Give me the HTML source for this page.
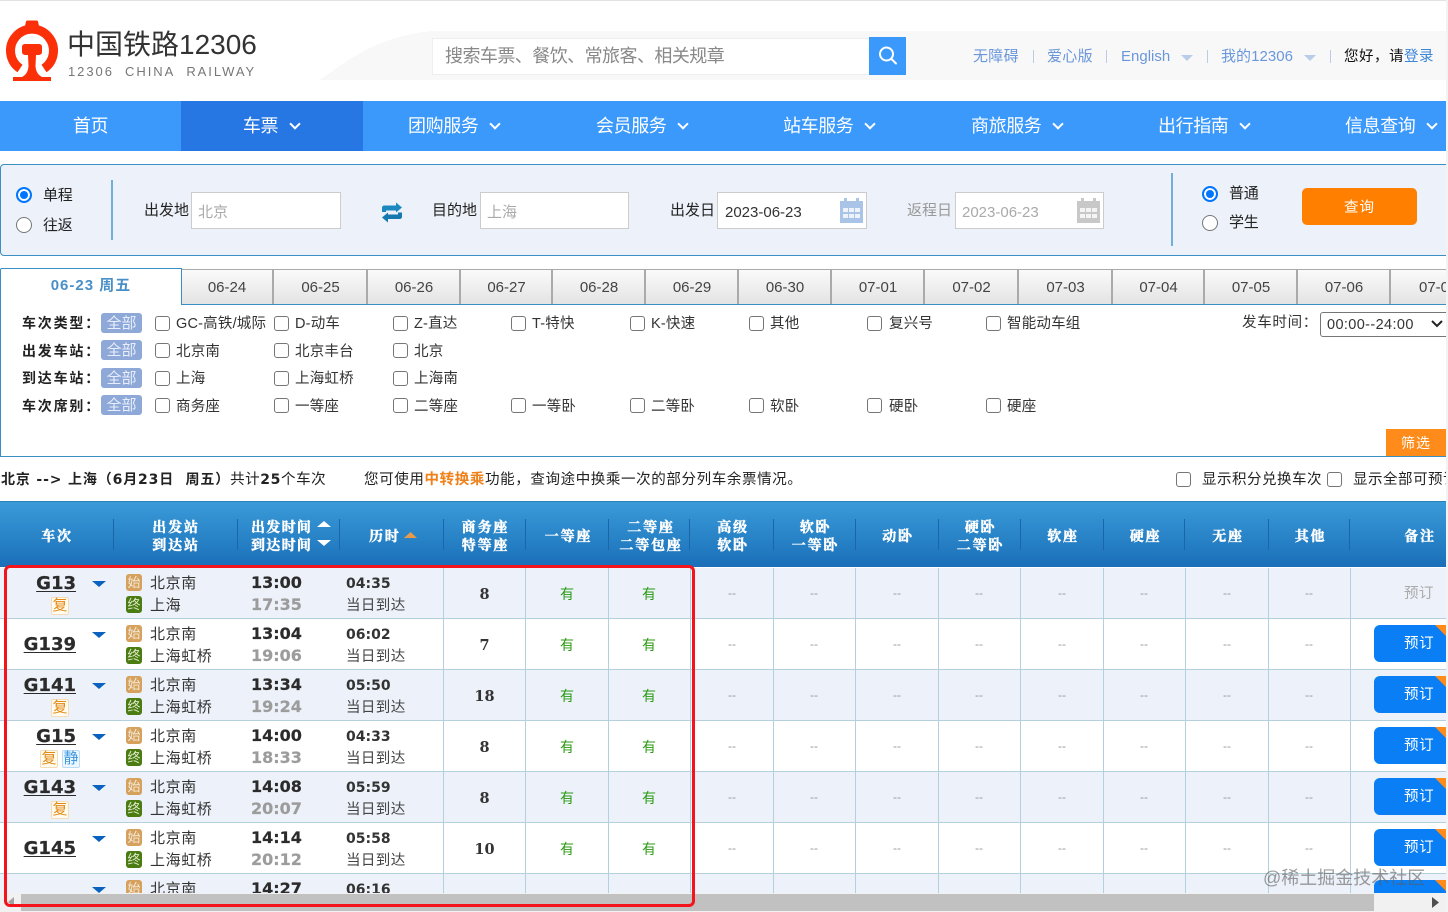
<!DOCTYPE html>
<html lang="zh-CN">
<head>
<meta charset="utf-8">
<title>中国铁路12306</title>
<style>
*{box-sizing:border-box;margin:0;padding:0}
html,body{width:1448px;height:912px;overflow:hidden;background:#fff}
body{position:relative;font-family:"Liberation Sans","Noto Sans CJK SC",sans-serif;font-size:14px;color:#333}
.a{position:absolute;white-space:nowrap}
.nav{top:101px;height:50px;line-height:51px;color:#fff;font-size:18px;text-align:center;letter-spacing:-.4px}
.chev{display:inline-block;width:8px;height:8px;border-right:2px solid #fff;border-bottom:2px solid #fff;transform:rotate(45deg);margin-left:13px;position:relative;top:-4px}
.tl{top:48px;font-size:15px;color:#6a97dc;line-height:18px;letter-spacing:.3px}
.sp{top:50px;width:1px;height:13px;background:#b8cdea}
.dn{width:0;height:0;border-left:6px solid transparent;border-right:6px solid transparent;border-top:6px solid #b9cdea;top:55px}
.rd{width:16px;height:16px;border-radius:50%;border:1px solid #767676;background:#fff}
.rd.on{border:2px solid #0075ff;background:#0075ff;box-shadow:inset 0 0 0 2px #fff}
.lb{font-size:15px;line-height:20px;color:#222;letter-spacing:0}
.inp{top:192px;height:37px;background:#fff;border:1px solid #ccc;line-height:39px;padding-left:6px;font-size:15px;color:#aaa}
.tab{top:269px;height:36px;border-right:2px solid #aaa;border-top:1px solid #aaa;background:linear-gradient(#fafafa,#e3e3e3);text-align:center;line-height:36px;font-size:15px;color:#444;padding-left:1px}
.k{left:22px;font-size:14px;font-weight:700;line-height:20px;color:#222;letter-spacing:1.8px;margin-top:1px}
.all{left:101px;width:41px;height:20px;background:#8ea8d8;border-radius:3px;color:#e8eefb;text-align:center;line-height:21px;font-size:15px}
.cb{width:15px;height:15px;border:1px solid #767676;border-radius:3px;background:#fff}
.ct{font-size:14.5px;line-height:20px;color:#333;letter-spacing:.2px;margin-top:2px}
.h{top:520px;color:#fff;font-size:14px;font-weight:700;line-height:18px;text-align:center;letter-spacing:1.8px;font-family:"Liberation Serif","Noto Serif CJK SC",serif;-webkit-text-stroke:.45px #fff}
.hs{top:519px;width:1px;height:31px;background:#1b66a8}
.row{position:absolute;left:0;width:1446px;height:51px;border-bottom:1px solid #b5d0dd}
.o{background:#edf1f9}.e{background:#fff}
.v{position:absolute;top:0;width:1px;height:51px;background:#b5d0dd}
.c{position:absolute;white-space:nowrap}
.no{left:0;width:76px;text-align:right;font:700 18px/22px "DejaVu Sans",sans-serif;color:#2b2b2b;text-decoration:underline;text-underline-offset:2px;margin-top:1px;-webkit-text-stroke:.25px #2b2b2b}
.ar{left:92px;top:13px;width:0;height:0;border-left:7px solid transparent;border-right:7px solid transparent;border-top:6px solid #0a62c0}
.tag{top:29px;width:18px;height:18px;background:#fffbee;border:1px solid #f5dcb8;border-radius:2px;color:#e58a15;font-size:15px;line-height:15px;text-align:center}
.tag.b{background:#eef7ff;border-color:#bcdcf5;color:#3d98e0}
.st{left:126px;width:16px;height:17px;border-radius:3px;color:#f4ead8;font-size:13px;line-height:17px;text-align:center}
.s1{background:#d5a15d;top:6px}.s2{background:#4b7c12;top:28px;color:#dce9c8}
.nm{left:150px;font-size:15px;line-height:20px;color:#333;letter-spacing:.6px;margin-top:2px}
.t{left:251px;font:700 16px/22px "DejaVu Sans",sans-serif;color:#2b2b2b;margin-top:0;-webkit-text-stroke:.2px currentColor}
.t2{color:#9c9c9c}
.du{left:346px;top:6px;font:700 14px/20px "DejaVu Sans",sans-serif;color:#333}
.dd{left:346px;top:28px;font-size:14.5px;line-height:20px;color:#444;letter-spacing:.4px}
.n{left:443px;width:83px;top:16px;text-align:center;font:700 14.5px/22px "DejaVu Serif",serif;color:#333}
.y{top:16px;width:82px;text-align:center;color:#2a9a12;font-size:14px;line-height:20px}
.d{top:15px;width:82px;text-align:center;color:#999;font-size:12px;line-height:20px}
.bk{left:1374px;top:6px;width:72px;height:37px;background:#0a7ff5;border-radius:6px 0 0 6px;color:#fff;line-height:39px;font-size:14.5px;letter-spacing:.6px;overflow:hidden;padding-left:30px;text-align:left}
.bk i{position:absolute;right:0;top:0;width:0;height:0;border-top:11px solid #ff8c1a;border-left:11px solid transparent}
</style>
</head>
<body>
<div class="a" style="left:0;top:0;width:1448px;height:1px;background:#e2e2e2"></div>

<!-- header band -->
<svg class="a" style="left:310px;top:28px" width="125" height="54" viewBox="0 0 125 54"><path d="M10 52 C40 30 70 8 122 3 L125 52 Z" fill="#f8f8f8"/></svg>
<div class="a" style="left:430px;top:31px;width:1016px;height:49px;background:#f8f8f8"></div>

<!-- logo -->
<svg class="a" style="left:0;top:15px" width="64" height="70" viewBox="0 15 64 70">
<path d="M20 68.500 A21.500 21.500 0 1 1 44 68.500" fill="none" stroke="#fb3008" stroke-width="9"/>
<path d="M26 21.500 Q26 20.500 28 20.500 L36 20.500 Q38 20.500 38 21.500 L39 26 L25 26 Z" fill="#fb3008"/>
<path d="M25 44 L39 44 Q42 44 42 47 L42 52 Q42 55 38 55 L36 55 L35.500 66 Q36 74 42 77 L51 77 L51 81 L13 81 L13 77 L22 77 Q28 74 28.500 66 L28 55 L26 55 Q22 55 22 52 L22 47 Q22 44 25 44 Z" fill="#fb3008"/>
</svg>
<div class="a" style="left:67px;top:27px;font-size:28px;line-height:36px;color:#333;letter-spacing:0">中国铁路12306</div>
<div class="a" style="left:68px;top:64px;font-size:13px;line-height:16px;color:#777;letter-spacing:1.95px">12306&nbsp; CHINA&nbsp; RAILWAY</div>

<!-- search -->
<div class="a" style="left:432px;top:38px;width:438px;height:37px;background:#fff;border:1px solid #eee;line-height:35px;padding-left:12px;font-size:18px;color:#888;letter-spacing:-.55px">搜索车票、餐饮、常旅客、相关规章</div>
<div class="a" style="left:869px;top:37px;width:37px;height:38px;background:#3b99fc"></div>
<svg class="a" style="left:876px;top:45px" width="24" height="24" viewBox="0 0 24 24"><circle cx="10.500" cy="9" r="6.500" fill="none" stroke="#fff" stroke-width="2"/><path d="M15.500 14l4.500 4.500" stroke="#fff" stroke-width="2" stroke-linecap="round"/></svg>

<div class="a tl" style="left:973px">无障碍</div><div class="a sp" style="left:1033px"></div>
<div class="a tl" style="left:1047px">爱心版</div><div class="a sp" style="left:1106px"></div>
<div class="a tl" style="left:1121px;letter-spacing:0">English</div><div class="a dn" style="left:1181px"></div><div class="a sp" style="left:1207px"></div>
<div class="a tl" style="left:1221px;letter-spacing:.05px">我的12306</div><div class="a dn" style="left:1304px"></div><div class="a sp" style="left:1330px"></div>
<div class="a" style="left:1344px;top:48px;font-size:14.5px;line-height:18px;color:#111;letter-spacing:.5px">您好，请<span style="color:#3b86d8">登录</span></div>

<!-- nav -->
<div class="a" style="left:0;top:101px;width:1446px;height:50px;background:#3b99fc"></div>
<div class="a" style="left:181px;top:101px;width:182px;height:50px;background:#2676e3"></div>
<div class="a nav" style="left:0;width:181px">首页</div>
<div class="a nav" style="left:180px;width:182px">车票<span class="chev"></span></div>
<div class="a nav" style="left:408px">团购服务<span class="chev"></span></div>
<div class="a nav" style="left:596px">会员服务<span class="chev"></span></div>
<div class="a nav" style="left:783px">站车服务<span class="chev"></span></div>
<div class="a nav" style="left:971px">商旅服务<span class="chev"></span></div>
<div class="a nav" style="left:1158px">出行指南<span class="chev"></span></div>
<div class="a nav" style="left:1345px">信息查询<span class="chev"></span></div>
<div class="a" style="left:1446px;top:0;width:2px;height:912px;background:#f3f3f3;z-index:9"></div>

<!-- query panel -->
<div class="a" style="left:0;top:164px;width:1448px;height:92px;background:#edf1f9;border:1px solid #3b8fc4;border-right:0;border-radius:4px 0 0 4px"></div>
<div class="a rd on" style="left:16px;top:187px"></div><div class="a lb" style="left:43px;top:186px;letter-spacing:-.2px">单程</div>
<div class="a rd" style="left:16px;top:217px"></div><div class="a lb" style="left:43px;top:216px;letter-spacing:-.2px">往返</div>
<div class="a" style="left:111px;top:180px;width:2px;height:60px;background:#6fb0d8"></div>
<div class="a lb" style="left:144px;top:201px">出发地</div>
<div class="a inp" style="left:191px;width:150px">北京</div>
<svg class="a" style="left:381px;top:202px" width="22" height="22" viewBox="0 0 22 22"><path d="M1 10V6Q1 3.500 3.500 3.500H15V0.500L21 5.500L15 10.500V8.500H5V10Z" fill="#1b89c0"/><path d="M21 10.500V14.500Q21 17 18.500 17H7V20.500L1 15.500L7 10.500V12.500H17V10.500Z" fill="#1578ae"/></svg>
<div class="a lb" style="left:432px;top:201px">目的地</div>
<div class="a inp" style="left:480px;width:149px">上海</div>
<div class="a lb" style="left:670px;top:201px">出发日</div>
<div class="a inp" style="left:717px;width:150px;color:#333;padding-left:7px">2023-06-23</div>
<svg class="a" style="left:839px;top:197px" width="25" height="27" viewBox="0 0 25 27"><path d="M1 4h23v22H1z" fill="#a9c4e6"/><rect x="5" y="1" width="3" height="6" fill="#a9c4e6"/><rect x="17" y="1" width="3" height="6" fill="#a9c4e6"/><g fill="#eef3fb"><rect x="4" y="11" width="5" height="4"/><rect x="10" y="11" width="5" height="4"/><rect x="16" y="11" width="5" height="4"/><rect x="4" y="17" width="5" height="4"/><rect x="10" y="17" width="5" height="4"/><rect x="16" y="17" width="5" height="4"/></g></svg>
<div class="a lb" style="left:907px;top:201px;color:#999">返程日</div>
<div class="a inp" style="left:955px;width:149px">2023-06-23</div>
<svg class="a" style="left:1076px;top:197px" width="25" height="27" viewBox="0 0 25 27"><path d="M1 4h23v22H1z" fill="#c8c8c8"/><rect x="5" y="1" width="3" height="6" fill="#c8c8c8"/><rect x="17" y="1" width="3" height="6" fill="#c8c8c8"/><g fill="#f4f4f4"><rect x="4" y="11" width="5" height="4"/><rect x="10" y="11" width="5" height="4"/><rect x="16" y="11" width="5" height="4"/><rect x="4" y="17" width="5" height="4"/><rect x="10" y="17" width="5" height="4"/><rect x="16" y="17" width="5" height="4"/></g></svg>
<div class="a" style="left:1171px;top:173px;width:2px;height:73px;background:#6fb0d8"></div>
<div class="a rd on" style="left:1202px;top:186px"></div><div class="a lb" style="left:1229px;top:184px;letter-spacing:-.2px">普通</div>
<div class="a rd" style="left:1202px;top:215px"></div><div class="a lb" style="left:1229px;top:213px;letter-spacing:-.2px">学生</div>
<div class="a" style="left:1302px;top:188px;width:115px;height:37px;background:#ff8000;border-radius:5px;color:#fff;text-align:center;line-height:40px;font-size:14.500px;letter-spacing:1px">查询</div>

<!-- date tabs -->
<div class="a tab" style="left:181px;width:93px">06-24</div>
<div class="a tab" style="left:274px;width:94px">06-25</div>
<div class="a tab" style="left:368px;width:93px">06-26</div>
<div class="a tab" style="left:461px;width:92px">06-27</div>
<div class="a tab" style="left:553px;width:93px">06-28</div>
<div class="a tab" style="left:646px;width:93px">06-29</div>
<div class="a tab" style="left:739px;width:93px">06-30</div>
<div class="a tab" style="left:832px;width:93px">07-01</div>
<div class="a tab" style="left:925px;width:94px">07-02</div>
<div class="a tab" style="left:1019px;width:94px">07-03</div>
<div class="a tab" style="left:1113px;width:92px">07-04</div>
<div class="a tab" style="left:1205px;width:93px">07-05</div>
<div class="a tab" style="left:1298px;width:93px">07-06</div>
<div class="a tab" style="left:1391px;width:57px;border-right:0;overflow:hidden;text-align:left;padding-left:28px">07-07</div>

<!-- filter box -->
<div class="a" style="left:181px;top:304px;width:1267px;height:1px;background:#3b8fc4"></div>
<div class="a" style="left:0;top:268px;width:182px;height:37px;background:#fff;border:1px solid #3b8fc4;border-bottom:0;border-radius:2px 0 0 0;text-align:center;line-height:34px;font-size:15px;font-weight:700;color:#4a90c8;letter-spacing:1px">06-23 周五</div>
<div class="a" style="left:0;top:305px;width:1px;height:152px;background:#3b8fc4"></div>
<div class="a" style="left:0;top:456px;width:1448px;height:1px;background:#3b8fc4"></div>

<div class="a k" style="top:312px">车次类型：</div><div class="a all" style="top:313px">全部</div>
<div class="a k" style="top:340px">出发车站：</div><div class="a all" style="top:340px">全部</div>
<div class="a k" style="top:367px">到达车站：</div><div class="a all" style="top:368px">全部</div>
<div class="a k" style="top:395px">车次席别：</div><div class="a all" style="top:395px">全部</div>

<div class="a cb" style="left:155px;top:316px"></div><div class="a ct" style="left:176px;top:312px">GC-高铁/城际</div>
<div class="a cb" style="left:274px;top:316px"></div><div class="a ct" style="left:295px;top:312px">D-动车</div>
<div class="a cb" style="left:393px;top:316px"></div><div class="a ct" style="left:414px;top:312px">Z-直达</div>
<div class="a cb" style="left:511px;top:316px"></div><div class="a ct" style="left:532px;top:312px">T-特快</div>
<div class="a cb" style="left:630px;top:316px"></div><div class="a ct" style="left:651px;top:312px">K-快速</div>
<div class="a cb" style="left:749px;top:316px"></div><div class="a ct" style="left:770px;top:312px">其他</div>
<div class="a cb" style="left:867px;top:316px"></div><div class="a ct" style="left:889px;top:312px">复兴号</div>
<div class="a cb" style="left:986px;top:316px"></div><div class="a ct" style="left:1007px;top:312px">智能动车组</div>

<div class="a cb" style="left:155px;top:343px"></div><div class="a ct" style="left:176px;top:340px">北京南</div>
<div class="a cb" style="left:274px;top:343px"></div><div class="a ct" style="left:295px;top:340px">北京丰台</div>
<div class="a cb" style="left:393px;top:343px"></div><div class="a ct" style="left:414px;top:340px">北京</div>

<div class="a cb" style="left:155px;top:371px"></div><div class="a ct" style="left:176px;top:367px">上海</div>
<div class="a cb" style="left:274px;top:371px"></div><div class="a ct" style="left:295px;top:367px">上海虹桥</div>
<div class="a cb" style="left:393px;top:371px"></div><div class="a ct" style="left:414px;top:367px">上海南</div>

<div class="a cb" style="left:155px;top:398px"></div><div class="a ct" style="left:176px;top:395px">商务座</div>
<div class="a cb" style="left:274px;top:398px"></div><div class="a ct" style="left:295px;top:395px">一等座</div>
<div class="a cb" style="left:393px;top:398px"></div><div class="a ct" style="left:414px;top:395px">二等座</div>
<div class="a cb" style="left:511px;top:398px"></div><div class="a ct" style="left:532px;top:395px">一等卧</div>
<div class="a cb" style="left:630px;top:398px"></div><div class="a ct" style="left:651px;top:395px">二等卧</div>
<div class="a cb" style="left:749px;top:398px"></div><div class="a ct" style="left:770px;top:395px">软卧</div>
<div class="a cb" style="left:867px;top:398px"></div><div class="a ct" style="left:889px;top:395px">硬卧</div>
<div class="a cb" style="left:986px;top:398px"></div><div class="a ct" style="left:1007px;top:395px">硬座</div>

<div class="a ct" style="left:1242px;top:311px;letter-spacing:.7px">发车时间：</div>
<div class="a" style="left:1320px;top:312px;width:128px;height:25px;border:1px solid #767676;border-radius:3px 0 0 3px;background:#fff;line-height:24px;padding-left:6px;font-size:14.500px;letter-spacing:.38px;color:#333">00:00--24:00</div>
<svg class="a" style="left:1430px;top:319px" width="14" height="10" viewBox="0 0 14 10"><path d="M2 2l5 5 5-5" fill="none" stroke="#222" stroke-width="2"/></svg>
<div class="a" style="left:1386px;top:429px;width:60px;height:27px;background:#ff8c1a;color:#fff;text-align:center;line-height:28px;font-size:14px;letter-spacing:1px">筛选</div>

<!-- summary -->
<div class="a" style="left:1px;top:470px;font-size:14.500px;line-height:20px;color:#222;letter-spacing:.6px"><b style="font-family:'DejaVu Sans','Noto Sans CJK SC',sans-serif;font-size:14px;letter-spacing:.85px">北京 --&gt; 上海（6月23日&nbsp; 周五）</b>共计<b style="font-family:'DejaVu Sans',sans-serif;font-size:14px">25</b>个车次</div>
<div class="a" style="left:364px;top:470px;font-size:14.500px;line-height:20px;color:#222;letter-spacing:.62px">您可使用<span style="color:#f08019;font-weight:700">中转换乘</span>功能，查询途中换乘一次的部分列车余票情况。</div>
<div class="a cb" style="left:1176px;top:472px"></div><div class="a ct" style="left:1202px;top:468px;color:#222;letter-spacing:.5px">显示积分兑换车次</div>
<div class="a cb" style="left:1327px;top:472px"></div><div class="a ct" style="left:1353px;top:468px;color:#222;width:93px;overflow:hidden;letter-spacing:.5px">显示全部可预订车次</div>

<!-- table header -->
<div class="a" style="left:0;top:501px;width:1446px;height:66px;background:linear-gradient(#3a9bd9,#1a6fb8);border-top:1px solid #2a83bb"></div>
<div class="a h" style="left:0;width:114px;top:529px">车次</div>
<div class="a h" style="left:114px;width:124px">出发站<br>到达站</div>
<div class="a h" style="left:251px;letter-spacing:1.3px">出发时间<br>到达时间</div>
<svg class="a" style="left:317px;top:520px" width="14" height="28" viewBox="0 0 14 28"><path d="M0 7L7 1l7 6z" fill="#fff"/><path d="M0 20h14l-7 6z" fill="#fff"/></svg>
<div class="a h" style="left:369px;top:529px">历时</div>
<svg class="a" style="left:404px;top:531px" width="13" height="8" viewBox="0 0 13 8"><path d="M0 7L6.500 1 13 7z" fill="#e89a4c"/></svg>
<div class="a h" style="left:444px;width:83px">商务座<br>特等座</div>
<div class="a h" style="left:527px;width:83px;top:529px">一等座</div>
<div class="a h" style="left:610px;width:82px">二等座<br>二等包座</div>
<div class="a h" style="left:692px;width:82px">高级<br>软卧</div>
<div class="a h" style="left:774px;width:83px">软卧<br>一等卧</div>
<div class="a h" style="left:857px;width:82px;top:529px">动卧</div>
<div class="a h" style="left:939px;width:83px">硬卧<br>二等卧</div>
<div class="a h" style="left:1022px;width:82px;top:529px">软座</div>
<div class="a h" style="left:1104px;width:83px;top:529px">硬座</div>
<div class="a h" style="left:1187px;width:82px;top:529px">无座</div>
<div class="a h" style="left:1269px;width:83px;top:529px">其他</div>
<div class="a h" style="left:1391px;width:58px;top:529px">备注</div>
<div class="a hs" style="left:113px"></div><div class="a hs" style="left:237px"></div><div class="a hs" style="left:339px"></div><div class="a hs" style="left:443px"></div><div class="a hs" style="left:525px"></div><div class="a hs" style="left:608px"></div><div class="a hs" style="left:689px"></div><div class="a hs" style="left:773px"></div><div class="a hs" style="left:855px"></div><div class="a hs" style="left:938px"></div><div class="a hs" style="left:1020px"></div><div class="a hs" style="left:1103px"></div><div class="a hs" style="left:1184px"></div><div class="a hs" style="left:1268px"></div><div class="a hs" style="left:1349px"></div>

<!-- rows -->
<div class="a" style="left:0;top:568px;width:1446px;height:325px;overflow:hidden">

<div class="row o" style="top:0">
<i class="v" style="left:443px"></i><i class="v" style="left:525px"></i><i class="v" style="left:608px"></i><i class="v" style="left:690px"></i><i class="v" style="left:773px"></i><i class="v" style="left:855px"></i><i class="v" style="left:938px"></i><i class="v" style="left:1020px"></i><i class="v" style="left:1103px"></i><i class="v" style="left:1185px"></i><i class="v" style="left:1268px"></i><i class="v" style="left:1350px"></i>
<div class="c no" style="top:4px">G13</div><div class="c ar"></div><div class="c tag" style="left:51px">复</div>
<div class="c st s1">始</div><div class="c nm" style="top:4px">北京南</div><div class="c st s2">终</div><div class="c nm" style="top:26px">上海</div>
<div class="c t" style="top:4px">13:00</div><div class="c t t2" style="top:26px">17:35</div><div class="c du">04:35</div><div class="c dd">当日到达</div>
<div class="c n">8</div><div class="c y" style="left:526px">有</div><div class="c y" style="left:608px">有</div>
<div class="c d" style="left:691px">--</div><div class="c d" style="left:773px">--</div><div class="c d" style="left:856px">--</div><div class="c d" style="left:938px">--</div><div class="c d" style="left:1021px">--</div><div class="c d" style="left:1103px">--</div><div class="c d" style="left:1186px">--</div><div class="c d" style="left:1268px">--</div>
<div class="c" style="left:1404px;top:16px;color:#aaa;font-size:14.500px;line-height:20px;letter-spacing:.4px">预订</div>
</div>

<div class="row e" style="top:51px">
<i class="v" style="left:443px"></i><i class="v" style="left:525px"></i><i class="v" style="left:608px"></i><i class="v" style="left:690px"></i><i class="v" style="left:773px"></i><i class="v" style="left:855px"></i><i class="v" style="left:938px"></i><i class="v" style="left:1020px"></i><i class="v" style="left:1103px"></i><i class="v" style="left:1185px"></i><i class="v" style="left:1268px"></i><i class="v" style="left:1350px"></i>
<div class="c no" style="top:14px">G139</div><div class="c ar"></div>
<div class="c st s1">始</div><div class="c nm" style="top:4px">北京南</div><div class="c st s2">终</div><div class="c nm" style="top:26px">上海虹桥</div>
<div class="c t" style="top:4px">13:04</div><div class="c t t2" style="top:26px">19:06</div><div class="c du">06:02</div><div class="c dd">当日到达</div>
<div class="c n">7</div><div class="c y" style="left:526px">有</div><div class="c y" style="left:608px">有</div>
<div class="c d" style="left:691px">--</div><div class="c d" style="left:773px">--</div><div class="c d" style="left:856px">--</div><div class="c d" style="left:938px">--</div><div class="c d" style="left:1021px">--</div><div class="c d" style="left:1103px">--</div><div class="c d" style="left:1186px">--</div><div class="c d" style="left:1268px">--</div>
<div class="c bk">预订<i></i></div>
</div>

<div class="row o" style="top:102px">
<i class="v" style="left:443px"></i><i class="v" style="left:525px"></i><i class="v" style="left:608px"></i><i class="v" style="left:690px"></i><i class="v" style="left:773px"></i><i class="v" style="left:855px"></i><i class="v" style="left:938px"></i><i class="v" style="left:1020px"></i><i class="v" style="left:1103px"></i><i class="v" style="left:1185px"></i><i class="v" style="left:1268px"></i><i class="v" style="left:1350px"></i>
<div class="c no" style="top:4px">G141</div><div class="c ar"></div><div class="c tag" style="left:51px">复</div>
<div class="c st s1">始</div><div class="c nm" style="top:4px">北京南</div><div class="c st s2">终</div><div class="c nm" style="top:26px">上海虹桥</div>
<div class="c t" style="top:4px">13:34</div><div class="c t t2" style="top:26px">19:24</div><div class="c du">05:50</div><div class="c dd">当日到达</div>
<div class="c n">18</div><div class="c y" style="left:526px">有</div><div class="c y" style="left:608px">有</div>
<div class="c d" style="left:691px">--</div><div class="c d" style="left:773px">--</div><div class="c d" style="left:856px">--</div><div class="c d" style="left:938px">--</div><div class="c d" style="left:1021px">--</div><div class="c d" style="left:1103px">--</div><div class="c d" style="left:1186px">--</div><div class="c d" style="left:1268px">--</div>
<div class="c bk">预订<i></i></div>
</div>

<div class="row e" style="top:153px">
<i class="v" style="left:443px"></i><i class="v" style="left:525px"></i><i class="v" style="left:608px"></i><i class="v" style="left:690px"></i><i class="v" style="left:773px"></i><i class="v" style="left:855px"></i><i class="v" style="left:938px"></i><i class="v" style="left:1020px"></i><i class="v" style="left:1103px"></i><i class="v" style="left:1185px"></i><i class="v" style="left:1268px"></i><i class="v" style="left:1350px"></i>
<div class="c no" style="top:4px">G15</div><div class="c ar"></div><div class="c tag" style="left:40px">复</div><div class="c tag b" style="left:62px">静</div>
<div class="c st s1">始</div><div class="c nm" style="top:4px">北京南</div><div class="c st s2">终</div><div class="c nm" style="top:26px">上海虹桥</div>
<div class="c t" style="top:4px">14:00</div><div class="c t t2" style="top:26px">18:33</div><div class="c du">04:33</div><div class="c dd">当日到达</div>
<div class="c n">8</div><div class="c y" style="left:526px">有</div><div class="c y" style="left:608px">有</div>
<div class="c d" style="left:691px">--</div><div class="c d" style="left:773px">--</div><div class="c d" style="left:856px">--</div><div class="c d" style="left:938px">--</div><div class="c d" style="left:1021px">--</div><div class="c d" style="left:1103px">--</div><div class="c d" style="left:1186px">--</div><div class="c d" style="left:1268px">--</div>
<div class="c bk">预订<i></i></div>
</div>

<div class="row o" style="top:204px">
<i class="v" style="left:443px"></i><i class="v" style="left:525px"></i><i class="v" style="left:608px"></i><i class="v" style="left:690px"></i><i class="v" style="left:773px"></i><i class="v" style="left:855px"></i><i class="v" style="left:938px"></i><i class="v" style="left:1020px"></i><i class="v" style="left:1103px"></i><i class="v" style="left:1185px"></i><i class="v" style="left:1268px"></i><i class="v" style="left:1350px"></i>
<div class="c no" style="top:4px">G143</div><div class="c ar"></div><div class="c tag" style="left:51px">复</div>
<div class="c st s1">始</div><div class="c nm" style="top:4px">北京南</div><div class="c st s2">终</div><div class="c nm" style="top:26px">上海虹桥</div>
<div class="c t" style="top:4px">14:08</div><div class="c t t2" style="top:26px">20:07</div><div class="c du">05:59</div><div class="c dd">当日到达</div>
<div class="c n">8</div><div class="c y" style="left:526px">有</div><div class="c y" style="left:608px">有</div>
<div class="c d" style="left:691px">--</div><div class="c d" style="left:773px">--</div><div class="c d" style="left:856px">--</div><div class="c d" style="left:938px">--</div><div class="c d" style="left:1021px">--</div><div class="c d" style="left:1103px">--</div><div class="c d" style="left:1186px">--</div><div class="c d" style="left:1268px">--</div>
<div class="c bk">预订<i></i></div>
</div>

<div class="row e" style="top:255px">
<i class="v" style="left:443px"></i><i class="v" style="left:525px"></i><i class="v" style="left:608px"></i><i class="v" style="left:690px"></i><i class="v" style="left:773px"></i><i class="v" style="left:855px"></i><i class="v" style="left:938px"></i><i class="v" style="left:1020px"></i><i class="v" style="left:1103px"></i><i class="v" style="left:1185px"></i><i class="v" style="left:1268px"></i><i class="v" style="left:1350px"></i>
<div class="c no" style="top:14px">G145</div><div class="c ar"></div>
<div class="c st s1">始</div><div class="c nm" style="top:4px">北京南</div><div class="c st s2">终</div><div class="c nm" style="top:26px">上海虹桥</div>
<div class="c t" style="top:4px">14:14</div><div class="c t t2" style="top:26px">20:12</div><div class="c du">05:58</div><div class="c dd">当日到达</div>
<div class="c n">10</div><div class="c y" style="left:526px">有</div><div class="c y" style="left:608px">有</div>
<div class="c d" style="left:691px">--</div><div class="c d" style="left:773px">--</div><div class="c d" style="left:856px">--</div><div class="c d" style="left:938px">--</div><div class="c d" style="left:1021px">--</div><div class="c d" style="left:1103px">--</div><div class="c d" style="left:1186px">--</div><div class="c d" style="left:1268px">--</div>
<div class="c bk">预订<i></i></div>
</div>

<div class="row o" style="top:306px">
<i class="v" style="left:443px"></i><i class="v" style="left:525px"></i><i class="v" style="left:608px"></i><i class="v" style="left:690px"></i><i class="v" style="left:773px"></i><i class="v" style="left:855px"></i><i class="v" style="left:938px"></i><i class="v" style="left:1020px"></i><i class="v" style="left:1103px"></i><i class="v" style="left:1185px"></i><i class="v" style="left:1268px"></i><i class="v" style="left:1350px"></i>
<div class="c ar"></div>
<div class="c st s1">始</div><div class="c nm" style="top:4px">北京南</div>
<div class="c t" style="top:4px">14:27</div><div class="c du">06:16</div>
<div class="c bk" style="line-height:46px">预订<i></i></div>
</div>
</div>

<!-- scrollbar -->
<div class="a" style="left:0;top:893px;width:1446px;height:19px;background:#f1f1f1"></div>
<div class="a" style="left:21px;top:894px;width:1353px;height:17px;background:#c1c1c1"></div>
<svg class="a" style="left:1431px;top:896px" width="10" height="13" viewBox="0 0 10 13"><path d="M1 1l7 5.500-7 5.500z" fill="#505050"/></svg>
<svg class="a" style="left:7px;top:896px" width="8" height="12" viewBox="0 0 8 12"><path d="M7 1L1 6l6 5z" fill="#a3a3a3"/></svg>

<!-- red highlight -->
<div class="a" style="left:4px;top:565px;width:691px;height:342px;border:3px solid #f4151c;border-radius:6px;z-index:5"></div>

<!-- watermark -->
<div class="a" style="left:1263px;top:866px;font-size:18px;line-height:24px;color:rgba(90,90,90,.6);z-index:6">@稀土掘金技术社区</div>
</body>
</html>
